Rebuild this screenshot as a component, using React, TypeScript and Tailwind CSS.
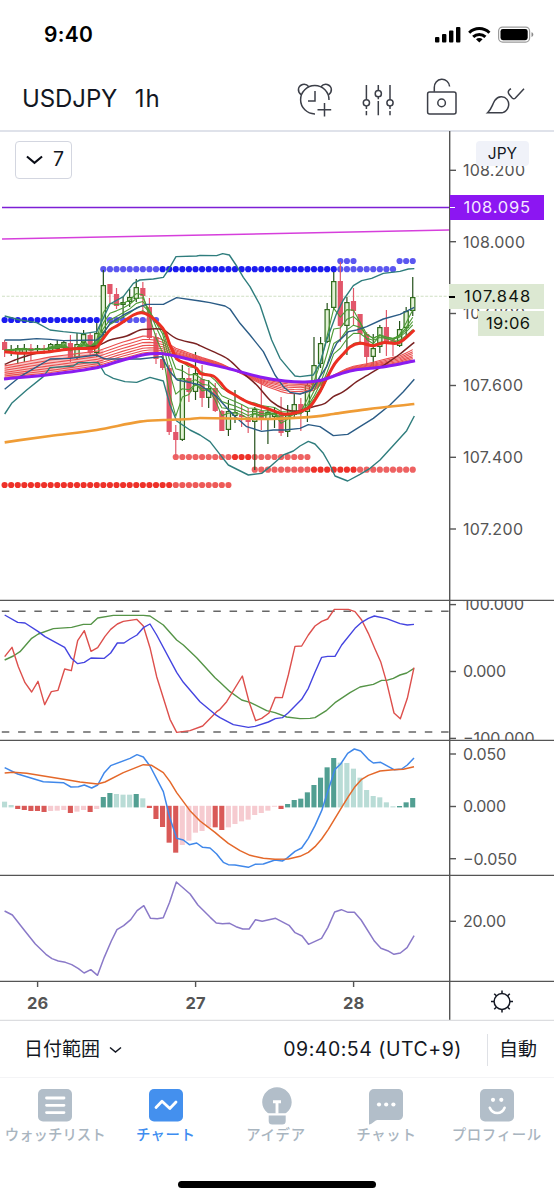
import React from "react";

type Pt = [number, number];

const STEP = 6.583;
const X0 = 4.6;
const bx = (i: number) => X0 + STEP * i;

/* Samples are stored as x,y pairs on a grid of `sx` by 3 units per pixel. */
function seg(ox: number, oy: number, v: number[], sx = 3): Pt[] {
  const out: Pt[] = [];
  for (let i = 0; i < v.length; i += 2) out.push([ox + v[i] / sx, oy + v[i + 1] / 3]);
  return out;
}

function path(pts: Pt[]) {
  return "M" + pts.map((p) => p[0].toFixed(2) + " " + p[1].toFixed(2)).join("L");
}

/* Catmull-Rom spline through the points, for the slow averages. */
function curve(pts: Pt[]) {
  let d = `M${pts[0][0].toFixed(2)} ${pts[0][1].toFixed(2)}`;
  for (let i = 0; i < pts.length - 1; i++) {
    const a = pts[Math.max(i - 1, 0)];
    const b = pts[i];
    const c = pts[i + 1];
    const e = pts[Math.min(i + 2, pts.length - 1)];
    const span = c[0] - b[0];
    const m1 = (c[1] - a[1]) / (c[0] - a[0]);
    const m2 = (e[1] - b[1]) / (e[0] - b[0]);
    const h = span / 3;
    d += `C${(b[0] + h).toFixed(2)} ${(b[1] + m1 * h).toFixed(2)} ${(c[0] - h).toFixed(2)} ${(c[1] - m2 * h).toFixed(2)} ${c[0].toFixed(2)} ${c[1].toFixed(2)}`;
  }
  return d;
}

function sample(pts: Pt[], x: number) {
  for (let i = 1; i < pts.length; i++) {
    if (x <= pts[i][0]) {
      const [ax, ay] = pts[i - 1];
      const [cx, cy] = pts[i];
      return ay + ((cy - ay) * (x - ax)) / (cx - ax);
    }
  }
  return pts[pts.length - 1][1];
}

/* [up, bodyTop, bodyBottom, wickTop, wickBottom] */
const candles: number[][] = [
  [0, 342, 350, 340, 357], [1, 349, 351, 345, 356], [1, 348, 353, 345, 364], [1, 348, 353, 344, 362],
  [0, 348, 351, 344, 361], [1, 348, 350, 345, 354], [0, 348, 350, 345, 354], [1, 344, 351, 343, 353],
  [1, 344, 349, 340, 351], [1, 342, 348, 340, 350], [0, 343, 358, 335, 362], [1, 344, 358, 333, 360],
  [1, 334, 343, 330, 345], [0, 335, 353, 333, 356], [1, 333, 353, 323, 357], [1, 285, 333, 270, 340],
  [0, 284, 294, 284, 303], [0, 294, 306, 288, 309], [1, 302, 305, 297, 318], [1, 297, 302, 289, 307],
  [1, 287, 299, 279, 302], [0, 288, 296, 282, 312], [0, 307, 338, 298, 340], [0, 337, 359, 333, 364],
  [0, 359, 368, 355, 370], [0, 368, 432, 365, 435], [0, 432, 440, 425, 457], [1, 378, 440, 365, 441],
  [0, 378, 392, 368, 402], [1, 373, 392, 352, 400], [0, 379, 398, 365, 407], [1, 388, 398, 380, 408],
  [0, 388, 411, 383, 412], [0, 411, 431, 410, 431], [1, 411, 430, 400, 436], [1, 412, 416, 390, 423],
  [0, 415, 417, 404, 427], [0, 420, 422, 408, 433], [1, 409, 422, 407, 470], [0, 411, 420, 379, 430],
  [1, 412, 420, 407, 444], [1, 413, 417, 407, 428], [0, 415, 433, 397, 436], [1, 415, 432, 405, 437],
  [1, 404, 415, 393, 417], [0, 404, 413, 398, 431], [1, 385, 412, 382, 422], [1, 365, 385, 337, 387],
  [1, 343, 364, 337, 368], [1, 309, 342, 303, 343], [1, 281, 308, 272, 310], [0, 281, 326, 262, 342],
  [1, 302, 326, 297, 355], [0, 301, 311, 288, 326], [0, 314, 334, 314, 345], [0, 334, 357, 332, 364],
  [1, 348, 357, 334, 367], [1, 327, 347, 325, 353], [0, 327, 342, 310, 356], [0, 340, 342, 338, 356],
  [1, 329, 346, 321, 347], [1, 311, 328, 307, 338], [1, 297, 311, 277, 316],
];

const closes = candles.map((c) => (c[0] ? c[1] : c[2]));

function ema(period: number): Pt[] {
  const k = 2 / (period + 1);
  let v = 350.5;
  return closes.map((c, i) => {
    v += k * (c - v);
    return [bx(i), v] as Pt;
  });
}

const purple: Pt[] = [
  [4, 379], [50, 374.5], [98, 367.5], [120, 361], [145, 354.5], [160, 353.5], [175, 356], [200, 362], [230, 369],
  [260, 377], [285, 381], [305, 382], [320, 380.5], [340, 374], [355, 370], [383, 367], [400, 364], [415, 360.7],
];
const slowTop: Pt[] = [
  [4, 366], [50, 357], [98, 351], [120, 343], [145, 335.5], [160, 338], [175, 348], [200, 357], [220, 363],
  [240, 373], [265, 386], [285, 393], [300, 394], [315, 390], [330, 377], [350, 367], [370, 363], [390, 358],
  [400, 356], [414, 349],
];
const ribbon = [0, 0.18, 0.34, 0.5, 0.64, 0.77, 0.89].map((t) =>
  candles.map((_, i) => {
    const x = bx(i);
    return [x, sample(slowTop, x) * (1 - t) + sample(purple, x) * t] as Pt;
  })
);

const redMain = [
  ...seg(0, 230, [14, 365, 60, 370, 150, 365, 211, 357, 270, 355, 290, 352, 310, 325, 330, 300]),
  ...seg(90, 240, [80, 258, 100, 245, 130, 225, 155, 218, 180, 228, 200, 245, 225, 275, 240, 315, 262, 358, 290, 370, 320, 385]),
  ...seg(200, 240, [0, 400, 40, 408, 60, 427, 80, 450, 100, 462, 140, 485, 200, 505, 250, 522, 285, 519]),
  ...seg(300, 240, [0, 515, 30, 500, 60, 455, 80, 415, 105, 370, 130, 342, 150, 321, 180, 310, 220, 317, 250, 308, 290, 310, 310, 300, 343, 270]),
];
const maroon = [
  ...seg(0, 230, [14, 403, 45, 390, 100, 372, 150, 365, 211, 357, 290, 348, 330, 330, 380, 318, 420, 300]),
  ...seg(90, 240, [170, 268, 215, 268, 258, 295, 320, 312]),
  ...seg(200, 240, [0, 317, 40, 335, 85, 358, 130, 400, 170, 435, 215, 485, 255, 508, 290, 514]),
  ...seg(300, 240, [0, 512, 40, 500, 75, 490, 100, 470, 130, 455, 170, 425, 200, 407, 220, 395, 260, 370, 300, 342, 343, 307]),
];
const orange = [
  ...seg(0, 230, [14, 637, 150, 618, 290, 600]),
  ...seg(90, 240, [150, 545, 220, 540, 300, 537]),
  ...seg(200, 240, [0, 534, 200, 537]),
  ...seg(300, 240, [0, 533, 50, 529, 100, 522, 200, 508, 343, 492]),
];
const bandTop = [
  ...seg(0, 230, [14, 258, 60, 270, 110, 278, 150, 300, 190, 305, 250, 311, 290, 305, 305, 275, 330, 222, 370, 200]),
  ...seg(90, 240, [130, 130, 150, 120, 190, 117, 220, 112, 235, 90, 258, 50, 320, 48]),
  ...seg(200, 240, [0, 46, 50, 47, 68, 41, 88, 45, 110, 78, 130, 112, 150, 140, 180, 195, 215, 300, 240, 355, 265, 385, 285, 408]),
  ...seg(300, 240, [0, 410, 40, 405, 60, 370, 80, 300, 110, 220, 130, 180, 160, 137, 185, 122, 215, 115, 250, 100, 300, 94, 325, 87, 343, 86]),
];
const bandLow = [
  ...seg(0, 230, [14, 552, 35, 520, 80, 480, 130, 440, 150, 413, 220, 408, 235, 398, 295, 398, 315, 432, 340, 445, 375, 455]),
  ...seg(90, 240, [140, 427, 180, 412, 220, 423, 240, 495, 260, 543, 300, 570]),
  ...seg(200, 240, [0, 585, 30, 605, 65, 650, 85, 675, 115, 690, 145, 705, 185, 700, 210, 680, 250, 645, 280, 633]),
  ...seg(300, 240, [0, 618, 25, 604, 45, 612, 70, 640, 90, 675, 105, 708, 143, 723, 180, 703, 210, 685, 240, 660, 290, 605, 320, 572, 343, 528]),
];
const innerTop = [
  ...seg(0, 230, [14, 330, 60, 330, 110, 326, 150, 328, 190, 332, 290, 330, 305, 318, 330, 280, 370, 255]),
  ...seg(90, 240, [150, 200, 170, 193, 220, 193, 260, 173]),
  ...seg(200, 240, [0, 183, 30, 188, 75, 198, 90, 207, 120, 250, 150, 285, 190, 335, 225, 405, 250, 440, 270, 457]),
  ...seg(300, 240, [0, 462, 35, 450, 60, 410, 80, 380, 100, 330, 110, 310, 145, 275, 170, 270, 200, 260, 250, 237, 300, 223, 343, 202]),
];
const innerLow = [
  ...seg(0, 230, [14, 478, 60, 440, 150, 387, 210, 385, 290, 375, 310, 385]),
  ...seg(90, 240, [50, 357, 150, 357, 215, 350, 240, 395, 262, 420, 300, 428]),
  ...seg(200, 240, [0, 435, 50, 470, 100, 525, 140, 560, 185, 574, 220, 570, 255, 570]),
  ...seg(300, 240, [0, 565, 25, 554, 60, 560, 100, 587, 143, 583, 180, 560, 220, 535, 270, 495, 310, 455, 343, 418]),
];

/* [y, first bar, last bar, colour] */
const dots: [number, number, number, string][] = [
  [320, 0, 14, "#1c1cf0"], [320, 15, 23, "#5b57f0"],
  [269.2, 15, 23, "#5b57f0"], [269.2, 24, 50, "#1c1cf0"], [269.2, 51, 59, "#5b57f0"],
  [261, 51, 53, "#5b57f0"], [261, 60, 62, "#5b57f0"],
  [485, 0, 25, "#ee3129"], [485, 26, 34, "#ee5a58"],
  [457, 26, 34, "#ee6262"], [457, 35, 37, "#ee3129"], [457, 38, 46, "#ee6262"],
  [469.7, 38, 46, "#ee6262"], [469.7, 47, 53, "#ee3129"], [469.7, 54, 62, "#ee6262"],
];

const oscGreen = [
  ...seg(0, 595, [14, 195, 40, 183, 60, 170, 95, 130, 115, 117, 160, 101, 215, 97, 250, 88, 273, 88, 293, 69, 340, 61, 430, 61, 450, 63, 490, 90, 530, 135, 550, 150, 590, 188, 645, 248]),
  ...seg(220, 595, [0, 262, 30, 290, 65, 315, 90, 322, 140, 347, 165, 353, 200, 366, 240, 371, 270, 370, 285, 368, 320, 346, 345, 323, 390, 293, 420, 276, 460, 268, 485, 256, 500, 256, 520, 250, 540, 240, 560, 234, 582, 220]),
];
const oscRed = [
  ...seg(0, 595, [14, 185, 36, 157, 55, 215, 75, 263, 95, 291, 114, 259, 134, 329, 154, 290, 174, 286, 194, 222, 214, 227, 233, 137, 253, 107, 273, 169, 293, 158, 315, 124, 332, 103, 352, 87, 370, 79, 410, 73, 430, 93, 450, 158, 470, 245, 510, 373, 530, 412, 570, 407, 608, 393, 650, 350]),
  ...seg(220, 595, [0, 343, 20, 320, 67, 243, 87, 320, 107, 377, 125, 370, 147, 354, 166, 307, 187, 308, 205, 240, 225, 154, 245, 153, 265, 120, 285, 93, 305, 79, 323, 72, 343, 43, 385, 43, 405, 50, 425, 75, 445, 115, 465, 162, 482, 200, 500, 262, 522, 354, 541, 371, 562, 310, 582, 218]),
];
const oscBlue = [
  ...seg(0, 595, [14, 60, 53, 82, 75, 84, 115, 110, 135, 125, 194, 157, 214, 190, 233, 206, 253, 202, 273, 189, 313, 190, 332, 174, 352, 144, 372, 144, 390, 132, 411, 120, 430, 98, 450, 87, 470, 120, 530, 232, 550, 262, 600, 320, 645, 358]),
  ...seg(220, 595, [0, 368, 40, 389, 85, 397, 105, 394, 145, 381, 166, 371, 187, 368, 205, 353, 245, 313, 265, 280, 285, 232, 305, 187, 323, 184, 345, 184, 365, 150, 405, 100, 425, 82, 445, 70, 463, 63, 500, 71, 540, 86, 562, 90, 582, 88]),
];

const macdBlue = [
  ...seg(0, 740, [14, 83, 53, 102, 130, 125, 190, 128, 213, 141, 235, 140, 253, 135, 275, 144, 293, 135, 313, 98, 332, 77, 390, 55, 411, 44, 430, 51, 450, 78, 490, 155, 510, 235, 530, 295, 550, 300, 568, 314, 590, 309, 608, 322, 630, 324, 650, 342]),
  ...seg(220, 740, [0, 355, 10, 367, 25, 374, 45, 375, 85, 382, 105, 373, 130, 372, 165, 360, 187, 363, 200, 355, 225, 334, 245, 324, 265, 295, 285, 257, 305, 212, 320, 165, 345, 88, 362, 72, 383, 40, 403, 27, 422, 33, 445, 58, 460, 69, 482, 67, 500, 77, 522, 89, 545, 87, 562, 75, 582, 54]),
];
const macdOrange = [
  ...seg(0, 740, [14, 99, 40, 97, 80, 100, 200, 119, 240, 126, 293, 132, 315, 126, 370, 98, 430, 74, 455, 76, 490, 98, 510, 125, 530, 158, 570, 212, 600, 243, 645, 277]),
  ...seg(220, 740, [0, 290, 25, 310, 60, 332, 90, 346, 130, 355, 165, 358, 205, 357, 240, 349, 265, 337, 285, 320, 305, 297, 325, 268, 345, 235, 365, 202, 385, 170, 405, 140, 425, 118, 445, 106, 480, 93, 520, 89, 550, 88, 582, 80]),
];
const hist = [
  185, 195, 207, 210, 213, 213, 216, 213, 212, 210, 219, 215, 210, 216, 207, 171, 159, 162, 164, 164, 162, 175, 204,
  237, 261, 308, 338, 315, 302, 278, 273, 262, 262, 270, 262, 252, 244, 239, 225, 219, 212, 200, 207, 192, 180, 176,
  157, 135, 113, 82, 54, 68, 69, 86, 113, 150, 168, 172, 187, 199, 198, 187, 174,
];
const histDark = new Set([2, 3, 4, 5, 6, 10, 13, 15, 16, 20, 22, 23, 24, 25, 26, 32, 33, 42, 43, 44, 45, 46, 47, 48, 49, 50, 60, 61, 62]);
const histUp = new Set([0, 1, 15, 16, 17, 18, 19, 20, 21, 43, 44, 45, 46, 47, 48, 49, 50, 51, 52, 53, 54, 55, 56, 57, 58, 59, 60, 61, 62]);

const atr = seg(0, 870, [
  13, 123, 35, 135, 70, 182, 100, 222, 130, 253, 147, 266, 165, 273, 185, 277, 203, 284, 222, 296, 238, 309, 257, 299,
  276, 316, 295, 262, 315, 213, 331, 179, 350, 167, 370, 149, 388, 122, 407, 107, 426, 145, 445, 146, 462, 143, 480,
  97, 499, 36, 538, 72, 560, 105, 595, 142, 612, 159, 630, 161, 650, 160, 668, 170, 687, 177, 705, 177, 723, 149, 742,
  154, 780, 145, 818, 166, 835, 188, 855, 198, 873, 223, 910, 205, 928, 172, 947, 126, 966, 119, 985, 127, 1003, 127,
  1022, 150, 1060, 214, 1078, 235, 1097, 242, 1115, 253, 1133, 249, 1152, 233, 1172, 197,
], 2.83);

function Line({ pts, color, w = 1.4, smooth = false }: { pts: Pt[]; color: string; w?: number; smooth?: boolean }) {
  return (
    <path d={smooth ? curve(pts) : path(pts)} fill="none" stroke={color} strokeWidth={w} strokeLinejoin="round" />
  );
}

function Tick({ y, label, len }: { y: number; label: string; len: number }) {
  return (
    <g>
      <path d={`M450 ${y}h6`} stroke="#555" strokeWidth="1.4" />
      <text x="463" y={y + 5.8} textLength={len} fontSize="16" fill="#555">
        {label}
      </text>
    </g>
  );
}

function Pane({ top, height, children }: { top: number; height: number; children: React.ReactNode }) {
  return (
    <svg
      className="block w-full shrink-0 overflow-hidden"
      width="554"
      height={height}
      viewBox={`0 ${top} 554 ${height}`}
    >
      {children}
      <path d={`M449.7 ${top}v${height}`} stroke="#555" strokeWidth="1.4" />
      <path d={`M0 ${top + height - 0.5}H554`} stroke="#555" strokeWidth="1.6" />
    </svg>
  );
}

function PricePane() {
  return (
    <Pane top={131} height={470}>
      <path d="M2 207.5H450" stroke="#7d1fd6" strokeWidth="1.6" />
      <path d="M2 239L449 230" stroke="#d63fdc" strokeWidth="1.5" />
      <path d="M2 296.3H449" stroke="#cfdfc4" strokeWidth="1.1" strokeDasharray="3 1.6" />
      {dots.map(([y, a, b, c], k) =>
        Array.from({ length: b - a + 1 }, (_, n) => (
          <circle key={k + "-" + n} cx={bx(a + n)} cy={y} r="3.1" fill={c} />
        ))
      )}
      <path
        d={path(ribbon[0].slice(0, 16)) + "L" + path(ribbon[6].slice(0, 16).reverse()).slice(1) + "Z"}
        fill="#f08080"
        opacity="0.45"
      />
      {candles.map(([up, t, b, h, l], i) => {
        const x = bx(i);
        return up ? (
          <g key={i} stroke="#2f6b1c" strokeWidth="1.2">
            <path d={`M${x} ${h}V${l}`} stroke="#24501a" />
            <rect x={x - 2.1} y={t + 0.6} width="4.2" height={Math.max(b - t - 1.2, 0.6)} fill="#e3f2d6" />
          </g>
        ) : (
          <g key={i}>
            <path d={`M${x} ${h}V${l}`} stroke="#e2596a" strokeWidth="1.2" />
            <rect x={x - 2.6} y={t} width="5.2" height={b - t} fill="#e2566a" />
          </g>
        );
      })}
      {ribbon.map((r, i) => (
        <Line key={i} pts={r} color="#ea5050" w={1.1} />
      ))}
      {[3, 5, 7, 9, 12].map((p) => (
        <Line key={p} pts={ema(p)} color="#4d9a35" w={1.1} />
      ))}
      <Line pts={innerTop} color="#2b5c86" />
      <Line pts={innerLow} color="#2b5c86" />
      <Line pts={bandTop} color="#2f7d7d" />
      <Line pts={bandLow} color="#2f7d7d" />
      <Line pts={maroon} color="#7a2222" w={1.5} smooth />
      <Line pts={orange} color="#ef9c36" w={2.7} smooth />
      <Line pts={redMain} color="#ec2f22" w={3} smooth />
      <Line pts={purple} color="#8a1cf0" w={3} smooth />
      <path d="M0 131.5H554" stroke="#dfe2ea" strokeWidth="1" />
      <Tick y={170.3} label="108.200" len={62} />
      <Tick y={241.7} label="108.000" len={62} />
      <Tick y={313.5} label="107.800" len={62} />
      <Tick y={385.5} label="107.600" len={60} />
      <Tick y={457.3} label="107.400" len={60} />
      <Tick y={529} label="107.200" len={60} />
    </Pane>
  );
}

function Chart() {
  return (
    <div className="relative flex flex-col">
      <PricePane />
      <Pane top={601} height={140}>
        {[611.3, 732].map((y) => (
          <path key={y} d={`M1.8 ${y}H449`} stroke="#666" strokeWidth="1.4" strokeDasharray="7.5 8.77" />
        ))}
        <Line pts={oscGreen} color="#559447" />
        <Line pts={oscRed} color="#dd4f4c" />
        <Line pts={oscBlue} color="#4444e0" />
        <Tick y={604.6} label="100.000" len={61} />
        <Tick y={671.5} label="0.000" len={43} />
        <Tick y={738.4} label="−100.000" len={71.5} />
      </Pane>
      <Pane top={741} height={135}>
        {hist.map((v, i) => {
          const up = histUp.has(i);
          const dark = histDark.has(i);
          const y = 740 + v / 3;
          const fill = up ? (dark ? "#529f92" : "#b9dcd6") : dark ? "#d95957" : "#f6cbd0";
          return up ? (
            <rect key={i} x={bx(i) - 2.6} y={y} width="5.1" height={Math.max(807.4 - y, 0.7)} fill={fill} />
          ) : (
            <rect key={i} x={bx(i) - 2.6} y={805.8} width="5.1" height={Math.max(y - 805.8, 0.9)} fill={fill} />
          );
        })}
        <Line pts={macdBlue} color="#4088ea" w={1.5} />
        <Line pts={macdOrange} color="#e4682a" w={1.5} />
        <Tick y={754} label="0.050" len={43} />
        <Tick y={806.5} label="0.000" len={43} />
        <Tick y={858.7} label="−0.050" len={54} />
      </Pane>
      <Pane top={876} height={106}>
        <Line pts={atr} color="#8a79c8" w={1.5} />
        <Tick y={921.3} label="20.00" len={43} />
      </Pane>
      <svg className="block w-full shrink-0" width="554" height="39" viewBox="0 982 554 39">
        <path d="M449.7 982v38" stroke="#555" strokeWidth="1.4" />
        <path d="M37.6 982v5M195.6 982v5M353.6 982v5" stroke="#555" strokeWidth="1.4" />
        {["26", "27", "28"].map((d, i) => (
          <text key={d} x={37.6 + i * 158} y="1009.3" textAnchor="middle" fontSize="16.5" fontWeight="700" fill="#555">
            {d}
          </text>
        ))}
        <g transform="translate(502 1001.5)" fill="none" stroke="#131722" strokeWidth="1.5">
          <circle r="7.9" />
          {[0, 45, 90, 135, 180, 225, 270, 315].map((a) => (
            <path key={a} d="M0 -8v-3" transform={`rotate(${a})`} />
          ))}
        </g>
        <path d="M0 1020.3H554" stroke="#dcdde0" strokeWidth="1.3" />
      </svg>

      <div className="absolute left-[15px] top-[10px] flex h-[38px] w-[57px] items-center rounded-[4px] border border-[#d3d6e0] bg-white pl-[9.5px] text-[19.5px] text-[#131722]">
        <svg width="17" height="10" viewBox="0 0 18 10" fill="none" stroke="#0b0e17" strokeWidth="2.2">
          <path d="M1 1.3l8 6.7 8-6.7" />
        </svg>
        <span className="ml-[10.5px]">7</span>
      </div>
      <div className="absolute left-[476px] top-[10px] flex h-[25px] w-[53px] items-center justify-center rounded-[4px] bg-[#f0f2f9] text-[15.5px] text-[#131722]">
        JPY
      </div>
      <div className="absolute left-[450px] top-[64px] flex h-[25px] w-[94px] items-center bg-[#8c16f2] pl-[13.5px] text-[16.5px] tracking-[0.75px] text-[#f5e8ff]">
        <span className="absolute left-0 top-[12px] h-px w-[5px] bg-white" />
        108.095
      </div>
      <div className="absolute left-[449px] top-[153px] flex h-[25px] w-[95px] items-center bg-[#dce8d2] pl-[15px] text-[16.5px] tracking-[1.1px] text-[#10150e]">
        <span className="absolute left-0 top-[12px] h-[1.5px] w-[6px] bg-black" />
        107.848
      </div>
      <div className="absolute left-[478px] top-[179.5px] flex h-[25px] w-[66px] items-center bg-[#dce8d2] pl-[8px] text-[16.5px] tracking-[0.4px] text-[#10150e]">
        19:06
      </div>
    </div>
  );
}

function StatusBar() {
  return (
    <div className="flex h-[66px] items-center justify-between pl-[44px] pr-[20px] pt-[3px]">
      <span className="text-[21px] font-semibold tracking-[0.3px] text-black">9:40</span>
      <svg width="100" height="18" viewBox="433 25.5 100 18">
        <rect x="434" y="36.5" width="4.4" height="5.5" rx="1" />
        <rect x="441" y="33.5" width="4.4" height="8.5" rx="1" />
        <rect x="448" y="30" width="4.4" height="12" rx="1" />
        <rect x="455" y="26.5" width="4.4" height="15.5" rx="1" />
        <g fill="none" stroke="#000" strokeWidth="3">
          <path d="M468.2 32.2a14.4 14.4 0 0 1 20.2 0" />
          <path d="M472.2 36.4a8.7 8.7 0 0 1 12.2 0" />
        </g>
        <path d="M475 38.8a4.7 4.7 0 0 1 6.6 0l-3.3 3.3z" />
        <rect x="497.6" y="26.6" width="31" height="15" rx="4" fill="none" stroke="#9b9b9b" strokeWidth="1.2" />
        <rect x="499.5" y="28.5" width="27.2" height="11.2" rx="2.4" />
        <path d="M530.5 31.8c2.4.6 2.4 4 0 4.6z" fill="#8a8a8a" />
      </svg>
    </div>
  );
}

function Header() {
  return (
    <div className="flex h-[65px] items-center justify-between border-b border-[#dfe2ea] pl-[22px] pr-[28px]">
      <div className="flex gap-[17.5px] pt-[1px] text-[24px] text-[#131722]">
        <span className="tracking-[-0.1px]">USDJPY</span>
        <span className="tracking-[1px]">1h</span>
      </div>
      <svg width="230" height="40" viewBox="296 75.500 230 40" fill="none" stroke="#3c3f48" strokeWidth="1.5">
        <path d="M301.3 92.4c-4.4-3.4-3.6-8.8 1.3-10.4 2.5-.6 4.6.2 6.2 2.2" />
        <path d="M328.5 92.4c4.4-3.4 3.6-8.8-1.3-10.4-2.5-.6-4.6.2-6.2 2.2" />
        <path d="M315 111.4a14.2 14.2 0 1 1 14-14" />
        <path d="M315 88.5v10h-7M324.5 100.5v13.5M317.5 107.2h13.7" />
        <path d="M366.4 82.5v14.8M366.4 103.4v3.2M366.4 108.5v4.2" />
        <circle cx="366.4" cy="100.3" r="3.1" />
        <path d="M378.3 82.5v5.6M378.3 94.3v2.5M378.3 98.5v14.2" />
        <circle cx="378.3" cy="91.2" r="3.1" />
        <path d="M390 82.5v14.8M390 103.4v3.2M390 108.5v4.2" />
        <circle cx="390" cy="100.3" r="3.1" />
        <rect x="427.6" y="89.5" width="28.4" height="22" rx="2" />
        <circle cx="441.6" cy="100.4" r="3.8" />
        <path d="M434.3 89.3v-4.3a7.6 7.6 0 0 1 15.3-1" />
        <path d="M487.6 110.3c3.8-3.2 4.5-8 7.4-12.6 3-4.3 9-4.7 12-.8 3.4 4.5 1.4 11.5-4.2 13.2-1 .3-2 .3-3 .2z" />
        <path d="M511 86.3c-2.4 1.1-3.7 3.3-1.8 5.6l3 3.6c1 1 2.2 1 3.2 0l8.6-9.2" />
      </svg>
    </div>
  );
}

const tabs = [
  {
    label: "ウォッチリスト",
    color: "text-[#a9b5bf]",
    spacing: "tracking-normal",
    icon: (
      <>
        <rect x="3" y="3" width="34" height="32.5" rx="5" fill="#b2bec9" />
        <path d="M11.5 12h17.5M11.5 19.3h17.5M11.5 26.6h17.5" stroke="#fff" strokeWidth="2.8" strokeLinecap="round" />
      </>
    ),
  },
  {
    label: "チャート",
    color: "text-[#3d8df0]",
    spacing: "tracking-[0.5px]",
    icon: (
      <>
        <rect x="3" y="3" width="34" height="32.5" rx="5" fill="#4490ee" />
        <path d="M10 21.5l6-6.3 7.8 7.3 6.2-6.5" fill="none" stroke="#fff" strokeWidth="2.8" strokeLinecap="round" strokeLinejoin="round" />
      </>
    ),
  },
  {
    label: "アイデア",
    color: "text-[#a9b5bf]",
    spacing: "tracking-[0.7px]",
    icon: (
      <>
        <path d="M21 1.3c8.200 0 14.700 6.700 14.700 15 0 4.300-2 7.900-5 10.300-.5.5-.8.6-1.500.6H12.700c-.7 0-1-.1-1.500-.6-3-2.400-5-6-5-10.300 0-8.300 6.600-15 14.800-15z" fill="#b2bec9" />
        <path d="M17 15.800h8M21 15.800v12" stroke="#fff" strokeWidth="2.900" />
        <path d="M12.700 29.400h17v5.600a3.500 3.500 0 0 1-3.500 3.500h-10a3.500 3.500 0 0 1-3.500-3.500z" fill="#b2bec9" />
      </>
    ),
  },
  {
    label: "チャット",
    color: "text-[#a9b5bf]",
    spacing: "tracking-[0.7px]",
    icon: (
      <>
        <path d="M8 3h24.500a4.500 4.500 0 0 1 4.500 4.500v22a4.500 4.500 0 0 1-4.500 4.500H11.500C8.500 34 6.500 38.500 3 38.500V8a5 5 0 0 1 5-5z" fill="#b2bec9" />
        <g fill="#fff">
          <circle cx="13" cy="18.500" r="2.100" />
          <circle cx="20.200" cy="18.500" r="2.100" />
          <circle cx="27.400" cy="18.500" r="2.100" />
        </g>
      </>
    ),
  },
  {
    label: "プロフィール",
    color: "text-[#a9b5bf]",
    spacing: "tracking-[0.7px]",
    icon: (
      <>
        <rect x="3" y="3" width="34" height="32.500" rx="5" fill="#b2bec9" />
        <circle cx="16" cy="13.800" r="2.100" fill="#fff" />
        <circle cx="24.300" cy="13.800" r="2.100" fill="#fff" />
        <path d="M12.800 21.800c2.800 7 12 7 14.800 0" fill="none" stroke="#fff" strokeWidth="2.600" strokeLinecap="round" />
      </>
    ),
  },
];

export default function App() {
  return (
    <div className="flex h-[1200px] w-[554px] flex-col overflow-hidden bg-white font-['Inter','Noto_Sans_CJK_JP',sans-serif]">
      <StatusBar />
      <Header />
      <Chart />
      <div className="flex h-[57px] items-center border-b border-[#f4f4f6] pl-[24px] pt-[2px] text-[19px] text-[#131722]">
        <span>日付範囲</span>
        <svg className="ml-[9px]" width="13" height="8" viewBox="0 0 13 8" fill="none" stroke="#131722" strokeWidth="1.5">
          <path d="M1 1.500l5.500 4.500 5.500-4.500" />
        </svg>
        <span className="ml-auto mr-[25px] text-[19.5px] tracking-[0.52px]">09:40:54 (UTC+9)</span>
        <span className="h-[32px] w-px bg-[#dfe1e6]" />
        <span className="pl-[11px] pr-[17px]">自動</span>
      </div>
      <div className="grid w-[552px] grid-cols-5 pt-[8px]">
        {tabs.map((t) => (
          <div key={t.label} className={`flex flex-col items-center ${t.color}`}>
            <svg width="40" height="40" viewBox="0 0 40 40">
              {t.icon}
            </svg>
            <span className={`whitespace-nowrap text-[14.4px] font-medium leading-[18px] ${t.spacing}`}>{t.label}</span>
          </div>
        ))}
      </div>
      <div className="mx-auto mt-auto mb-[12px] h-[7px] w-[198px] rounded-full bg-black" />
    </div>
  );
}
